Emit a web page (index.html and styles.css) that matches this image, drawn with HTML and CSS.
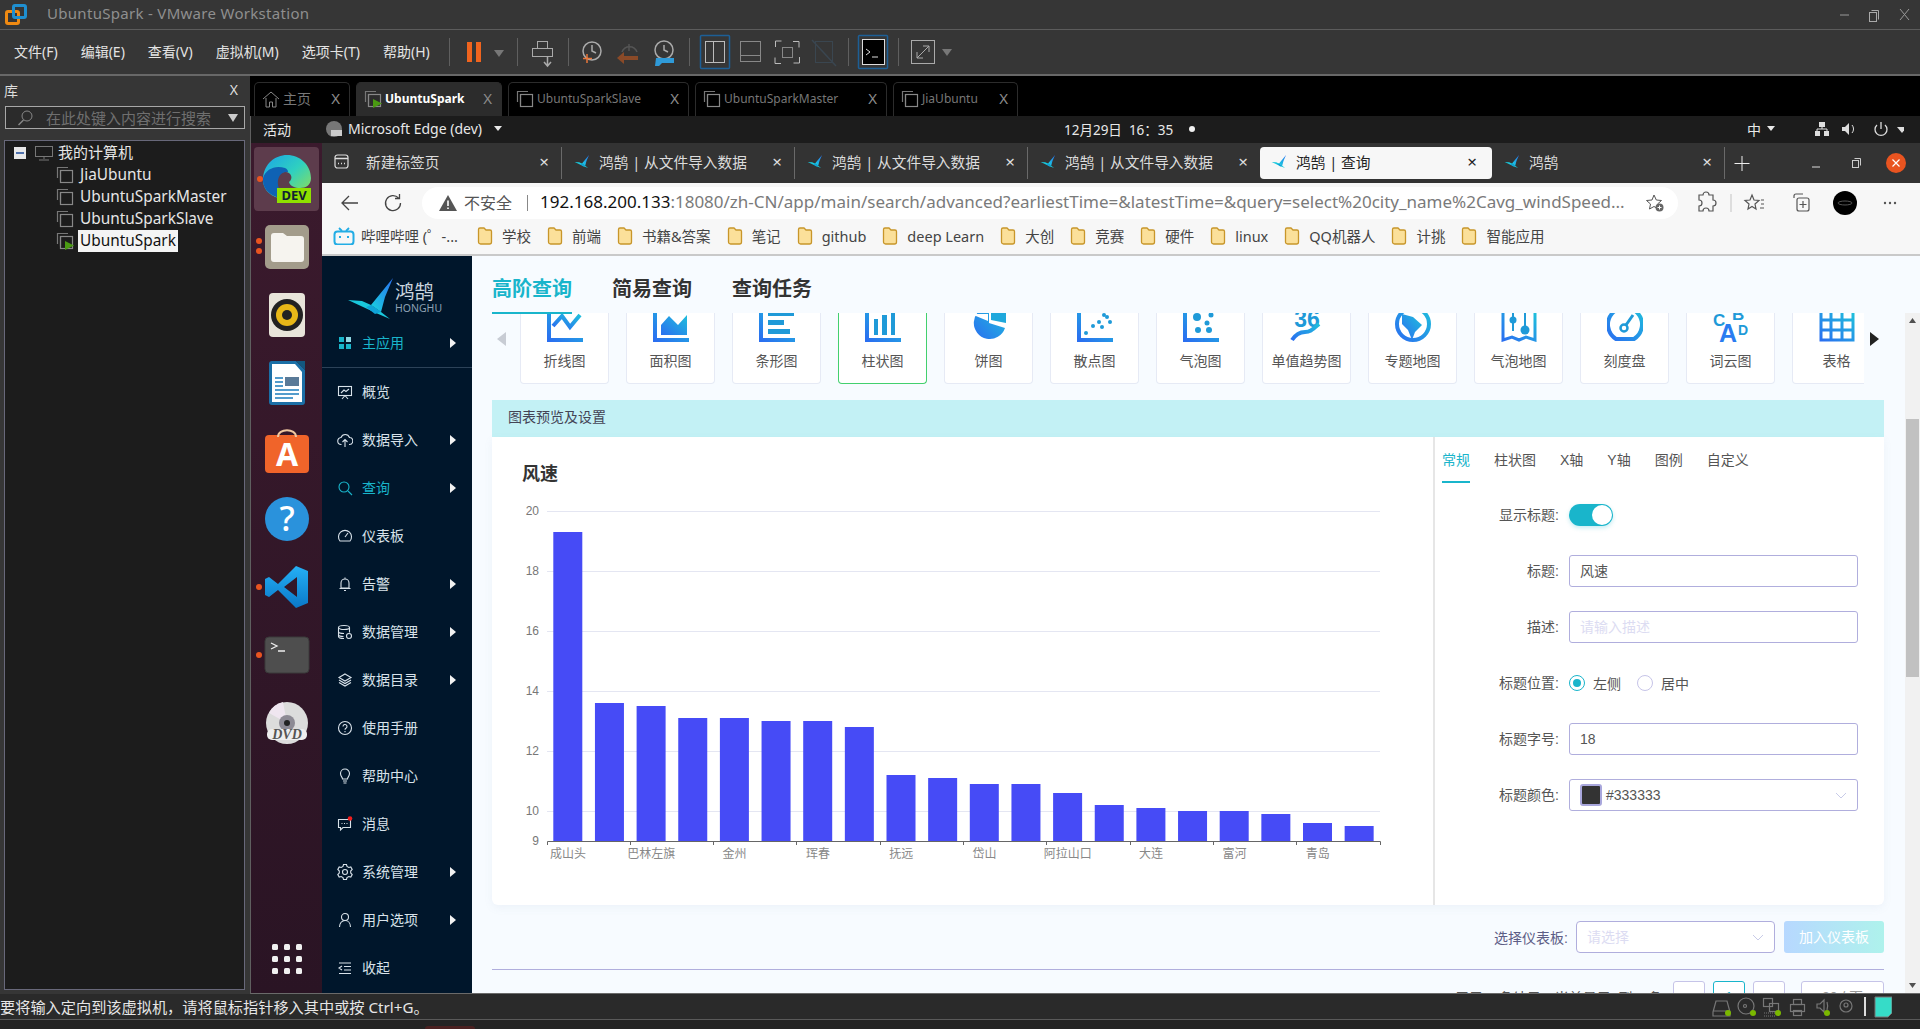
FILE: index.html
```html
<!DOCTYPE html>
<html lang="zh-CN">
<head>
<meta charset="utf-8">
<title>UbuntuSpark - VMware Workstation</title>
<link rel="stylesheet" href="styles.css">
</head>
<body>
<svg class="defs" width="0" height="0" aria-hidden="true">
  <defs>
    <linearGradient id="ig" x1="0" y1="1" x2="1" y2="0"><stop offset="0" stop-color="#2a6ff0"/><stop offset="1" stop-color="#1fbfdc"/></linearGradient>
    <linearGradient id="wing" x1="0" y1="1" x2="1" y2="0"><stop offset="0" stop-color="#18d6e0"/><stop offset="1" stop-color="#2a6ff0"/></linearGradient>
    <linearGradient id="edge" x1="0" y1="0" x2="1" y2="1"><stop offset="0" stop-color="#1aa3e8"/><stop offset=".5" stop-color="#2fd0c0"/><stop offset="1" stop-color="#9be04a"/></linearGradient>
    <linearGradient id="vsc" x1="0" y1="0" x2="0" y2="1"><stop offset="0" stop-color="#25b0f5"/><stop offset="1" stop-color="#0a78c8"/></linearGradient>
    <symbol id="bird" viewBox="346 275 50 45">
      <polygon points="393,277 371,304 381,311 385,296" fill="url(#wing)"/>
      <polygon points="348,299 362,300 371,304 381,311 390,318 376,312" fill="#19c8dc"/>
      <polygon points="371,304 381,311 375,313 366,306" fill="#0fa3d8"/>
    </symbol>
    <symbol id="folder" viewBox="0 0 16 20">
      <path d="M1.500 3.500a1.500 1.500 0 0 1 1.500-1.500h4l2 2h4a1.500 1.500 0 0 1 1.500 1.500v10.500a2 2 0 0 1-2 2h-9a2 2 0 0 1-2-2z" fill="#fbe09a" stroke="#c8962a" stroke-width="1.300"/>
    </symbol>
    <symbol id="vmicon" viewBox="0 0 18 18">
      <path d="M1.500 12V1.500H12" fill="none" stroke="#777" stroke-width="1.200"/>
      <path d="M4.500 14.500V4.500H14" fill="none" stroke="#777" stroke-width="1.200"/>
      <rect x="4.500" y="4.500" width="12" height="12" fill="none" stroke="#888" stroke-width="1.200"/>
    </symbol>
    <symbol id="vmrun" viewBox="0 0 18 18">
      <path d="M1.500 12V1.500H12" fill="none" stroke="#777" stroke-width="1.200"/>
      <path d="M4.500 14.500V4.500H14" fill="none" stroke="#777" stroke-width="1.200"/>
      <rect x="4.500" y="4.500" width="12" height="12" fill="none" stroke="#888" stroke-width="1.200"/>
      <polygon points="9,9 18,13.500 9,18" fill="#4a9a12"/>
    </symbol>
  </defs>
</svg>

<div class="app">
  <header class="titlebar">
    <svg class="vm-logo" width="22" height="22" viewBox="0 0 22 22"><rect x="1.500" y="7.500" width="12" height="12" rx="1.500" fill="none" stroke="#f08a12" stroke-width="3"/><rect x="8.500" y="1.500" width="12" height="12" rx="1.500" fill="none" stroke="#1f8fd0" stroke-width="3"/></svg>
    <span class="title-text">UbuntuSpark - VMware Workstation</span>
    <svg class="win-ctl" width="85" height="28" viewBox="1835 0 85 28"><path d="M1840 14h9" stroke="#999"/><rect x="1869.500" y="11.500" width="7" height="9" fill="none" stroke="#aaa"/><path d="M1871.500 9.500h7v9" fill="none" stroke="#aaa"/><path d="M1900 8l9 11M1909 8l-9 11" stroke="#999"/></svg>
  </header>

  <nav class="toolbar">
    <div class="menus"><span>文件(F)</span><span>编辑(E)</span><span>查看(V)</span><span>虚拟机(M)</span><span>选项卡(T)</span><span>帮助(H)</span></div>
    <i class="sep"></i>
    <svg width="67" height="45" viewBox="450 30 67 45"><rect x="467" y="42" width="5" height="20" fill="#f0641e"/><rect x="476" y="42" width="5" height="20" fill="#f0641e"/><polygon points="494,50 504,50 499,57" fill="#777"/></svg>
    <i class="sep"></i>
    <svg width="50" height="45" viewBox="518 30 50 45"><g fill="none" stroke="#aaa"><rect x="537.500" y="41.500" width="10" height="7"/><rect x="532.500" y="48.500" width="20" height="8"/><path d="M547.500 57v9M544 62l3.500 4 3.500-4" stroke-width="1.500"/></g></svg>
    <i class="sep"></i>
    <svg width="120" height="45" viewBox="569 30 120 45"><g fill="none" stroke-width="1.500"><circle cx="592" cy="51" r="9" stroke="#aaa"/><path d="M592 45v6l4 2" stroke="#aaa"/><path d="M587 54v9M583 58.500h9" stroke="#e8763a"/><path d="M622 52a8 8 0 0 1 15 0" stroke="#555"/><path d="M629 44v7" stroke="#555"/><circle cx="664" cy="50" r="9" stroke="#aaa"/><path d="M664 45v5l4 2" stroke="#aaa"/></g><rect x="619" y="56" width="19" height="4" fill="#8a4a28"/><polygon points="624,52 624,64 617,58" fill="#8a4a28"/><path d="M656 58h18v5h-12l-3 3h-4z" fill="#2f9ad8"/></svg>
    <i class="sep"></i>
    <svg width="158" height="45" viewBox="690 30 158 45"><g fill="none"><rect x="700.500" y="35.500" width="29" height="33" rx="1" stroke="#1d5f96" stroke-width="1.500"/><rect x="705.500" y="41.500" width="19" height="21" stroke="#bbb"/><path d="M713.500 42v20" stroke="#bbb"/><rect x="740.500" y="41.500" width="20" height="20" stroke="#888"/><path d="M741 55.500h19" stroke="#888"/><path d="M775.500 47v-6h6M793 41.500h6v6M799.500 57v6h-6M781 63.500h-6v-6" stroke="#bbb"/><rect x="782.500" y="47.500" width="10" height="10" stroke="#888"/><rect x="815.500" y="41.500" width="17" height="21" stroke="#3a4650"/><path d="M812 40l24 26" stroke="#3a4650" stroke-width="1.500"/></g></svg>
    <i class="sep"></i>
    <svg width="49" height="45" viewBox="849 30 49 45"><rect x="858.500" y="35.500" width="29" height="33" rx="1" fill="none" stroke="#1d5f96" stroke-width="1.500"/><rect x="862.500" y="39.500" width="22" height="25" fill="#000" stroke="#ddd"/><path d="M866 49l4 3-4 3M872 57h6" fill="none" stroke="#ddd"/></svg>
    <i class="sep"></i>
    <svg width="62" height="45" viewBox="899 30 62 45"><rect x="911.500" y="40.500" width="23" height="23" fill="none" stroke="#aaa"/><path d="M917 58l12-12M923 46h6v6M917 52v6h6" fill="none" stroke="#aaa"/><polygon points="942,49 952,49 947,56" fill="#777"/></svg>
  </nav>

  <div class="workspace">
    <aside class="library">
      <div class="lib-head"><span>库</span><span class="lib-x">X</span></div>
      <div class="lib-search">
        <svg width="18" height="18" viewBox="0 0 18 18"><circle cx="11" cy="7" r="5" fill="none" stroke="#888"/><path d="M7.500 11l-5 5" stroke="#888" stroke-width="1.500"/></svg>
        <span>在此处键入内容进行搜索</span>
        <svg class="lib-tri" width="10" height="8" viewBox="0 0 10 8"><polygon points="0,0 10,0 5,8" fill="#ccc"/></svg>
      </div>
      <div class="tree">
        <div class="tree-row root">
          <svg width="12" height="12" viewBox="0 0 12 12"><rect width="12" height="12" fill="#e8e8e8"/><path d="M2 6h8" stroke="#1c4a9a" stroke-width="1.500"/></svg>
          <svg class="tree-pc" width="18" height="15" viewBox="0 0 18 15"><rect x=".5" y=".5" width="17" height="10" fill="none" stroke="#777"/><path d="M9 11v2M4 14h10" stroke="#777"/></svg>
          <span>我的计算机</span>
        </div>
        <div class="tree-row child"><svg width="18" height="18"><use href="#vmicon"/></svg><span>JiaUbuntu</span></div>
        <div class="tree-row child"><svg width="18" height="18"><use href="#vmicon"/></svg><span>UbuntuSparkMaster</span></div>
        <div class="tree-row child"><svg width="18" height="18"><use href="#vmicon"/></svg><span>UbuntuSparkSlave</span></div>
        <div class="tree-row child"><svg width="18" height="18"><use href="#vmrun"/></svg><span class="selected">UbuntuSpark</span></div>
      </div>
    </aside>

    <section class="vm">
      <div class="vm-tabs">
        <div class="vm-tab w-home"><svg width="18" height="18" viewBox="0 0 18 18"><path d="M1 9l8-7 8 7M4 8v9h3.500v-5h3v5H14V8" fill="none" stroke="#888"/></svg><span>主页</span><b>X</b></div>
        <div class="vm-tab w-spark active"><svg width="18" height="18"><use href="#vmrun"/></svg><span>UbuntuSpark</span><b>X</b></div>
        <div class="vm-tab w-slave"><svg width="18" height="18"><use href="#vmicon"/></svg><span>UbuntuSparkSlave</span><b>X</b></div>
        <div class="vm-tab w-master"><svg width="18" height="18"><use href="#vmicon"/></svg><span>UbuntuSparkMaster</span><b>X</b></div>
        <div class="vm-tab w-jia"><svg width="18" height="18"><use href="#vmicon"/></svg><span>JiaUbuntu</span><b>X</b></div>
      </div>

      <div class="guest">
        <div class="gnome-bar">
          <span class="g-act">活动</span>
          <span class="g-app"><svg width="16" height="16" viewBox="0 0 16 16"><circle cx="8" cy="8" r="8" fill="#777"/><rect x="5" y="9" width="11" height="6" fill="#ccc"/></svg>Microsoft Edge (dev)<i class="g-tri"></i></span>
          <span class="g-clock">12月29日&nbsp;&nbsp;16：35<i class="g-dot"></i></span>
          <span class="g-right">
            <span class="g-ime">中<i class="g-tri"></i></span>
            <svg width="90" height="16" viewBox="1810 0 90 16"><g fill="#ddd"><rect x="1815" y="1" width="6" height="5"/><rect x="1811" y="10" width="5" height="5"/><rect x="1820" y="10" width="5" height="5"/><path d="M1818 6v2M1813 10V8h10v2" stroke="#ddd" fill="none"/><polygon points="1838,6 1841,6 1845,2 1845,14 1841,10 1838,10"/><path d="M1848 4a6 6 0 0 1 0 8" stroke="#ddd" fill="none"/><path d="M1873 4a6 6 0 1 0 8 0M1877 1v7" stroke="#ddd" fill="none" stroke-width="1.300"/><polygon points="1893,6 1903,6 1898,12"/></g></svg>
          </span>
        </div>

        <div class="guest-body">
          <aside class="dock">
            <div class="dock-item active"><i class="dot"></i>
              <svg width="50" height="50" viewBox="0 0 50 50"><path d="M1 24C2 10 13 1 25 1c13 0 24 10 24 23 0 7-5 10-11 10-5 0-10-2-11-6 4-3 3-9-3-10-7-1-12 5-11 13 1 6 6 10 12 13C13 46 0 38 1 24z" fill="url(#edge)"/><path d="M1 24c3-9 12-13 22-10 2 1 3 2 3 4-7-1-11 5-10 13 1 6 6 10 12 13C13 46 0 38 1 24z" fill="#0f62b4"/><rect x="15" y="34" width="34" height="15" fill="#8fe000"/><text class="dev-text" x="32" y="46">DEV</text></svg>
            </div>
            <div class="dock-item"><i class="dot two"></i>
              <svg width="46" height="46" viewBox="0 0 46 46"><rect x="1" y="1" width="44" height="44" rx="5" fill="#a39c8b"/><path d="M7 12a3 3 0 0 1 3-3h9l4 3h14a3 3 0 0 1 3 3v20a3 3 0 0 1-3 3H10a3 3 0 0 1-3-3z" fill="#f6f4ef"/></svg>
            </div>
            <div class="dock-item">
              <svg width="38" height="46" viewBox="0 0 38 46"><rect x="1" y="1" width="36" height="44" rx="4" fill="#e8e4da"/><circle cx="19" cy="23" r="16" fill="#222"/><circle cx="19" cy="23" r="11" fill="#e8b818"/><circle cx="19" cy="23" r="5" fill="#222"/></svg>
            </div>
            <div class="dock-item">
              <svg width="38" height="46" viewBox="0 0 38 46"><path d="M1 4a3 3 0 0 1 3-3h24l9 9v32a3 3 0 0 1-3 3H4a3 3 0 0 1-3-3z" fill="#1b6fa6"/><path d="M4 4h23l7 8v30H4z" fill="#fff"/><polygon points="28,1 37,1 37,10" fill="#12577f"/><rect x="17" y="17" width="14" height="9" fill="#5a7a98"/><g stroke="#1b7cbc" stroke-width="1.500"><path d="M7 18h8M7 22h8M7 26h8M7 30h24M7 34h24M7 38h18"/></g></svg>
            </div>
            <div class="dock-item">
              <svg width="46" height="46" viewBox="0 0 46 46"><rect x="1" y="7" width="44" height="38" rx="4" fill="#f0642a"/><path d="M14 9c0-9 18-9 18 0" fill="none" stroke="#f0c8a0" stroke-width="2"/><text class="store-a" x="23" y="38">A</text></svg>
            </div>
            <div class="dock-item">
              <svg width="46" height="46" viewBox="0 0 46 46"><circle cx="23" cy="23" r="22" fill="#2a92dc"/><text class="help-q" x="23" y="35">?</text></svg>
            </div>
            <div class="dock-item"><i class="dot"></i>
              <svg width="44" height="44" viewBox="0 0 44 44"><path d="M31 1L13 19 4 12 0 14v16l4 2 9-7 18 18 12-5V6zM32 12v20L19 22z" fill="url(#vsc)" fill-rule="evenodd"/></svg>
            </div>
            <div class="dock-item"><i class="dot"></i>
              <svg width="46" height="38" viewBox="0 0 46 38"><rect x="1" y="1" width="44" height="36" rx="4" fill="#4e4e4e" stroke="#3a3a3a"/><path d="M7 7l6 3-6 3M14 15h7" fill="none" stroke="#eee" stroke-width="1.300"/></svg>
            </div>
            <div class="dock-item">
              <svg width="44" height="44" viewBox="0 0 44 44"><circle cx="22" cy="22" r="21" fill="#dcdcdc"/><path d="M22 22L4 12a21 21 0 0 1 14-11z" fill="#efe6f0"/><circle cx="22" cy="22" r="8" fill="#8d8a94"/><circle cx="22" cy="22" r="3" fill="#222"/><rect x="2" y="28" width="40" height="11" rx="5" fill="#eee"/><text class="dvd-t" x="22" y="38">DVD</text></svg>
            </div>
            <div class="dock-grid"><i></i><i></i><i></i><i></i><i></i><i></i><i></i><i></i><i></i></div>
          </aside>

          <div class="browser">
            <div class="b-tabs">
              <div class="b-tab first"><svg class="t-ico" width="15" height="15" viewBox="0 0 15 15"><rect x="1" y="1" width="13" height="13" rx="2.500" fill="none" stroke="#ddd" stroke-width="1.200"/><path d="M1 4.500h13M4 9.500h1M7 9.500h1M10 9.500h1" stroke="#ddd" stroke-width="1.300"/></svg><span>新建标签页</span><b>×</b></div>
              <div class="b-tab"><svg class="t-ico" width="16" height="15"><use href="#bird"/></svg><span>鸿鹄 | 从文件导入数据</span><b>×</b></div>
              <div class="b-tab"><svg class="t-ico" width="16" height="15"><use href="#bird"/></svg><span>鸿鹄 | 从文件导入数据</span><b>×</b></div>
              <div class="b-tab last-pre"><svg class="t-ico" width="16" height="15"><use href="#bird"/></svg><span>鸿鹄 | 从文件导入数据</span><b>×</b></div>
              <div class="b-tab on"><svg class="t-ico" width="16" height="15"><use href="#bird"/></svg><span>鸿鹄 | 查询</span><b>×</b></div>
              <div class="b-tab"><svg class="t-ico" width="16" height="15"><use href="#bird"/></svg><span>鸿鹄</span><b>×</b></div>
              <svg class="b-win" width="195" height="40" viewBox="1725 0 195 40"><path d="M1742 13v15M1734.500 20.500h15" stroke="#eee" fill="none"/><path d="M1812 24h8" stroke="#ddd"/><rect x="1852.500" y="17.500" width="6" height="7" fill="none" stroke="#ccc"/><path d="M1854.500 15.500h6v7" fill="none" stroke="#ccc"/><circle cx="1896" cy="20" r="10" fill="#e95420"/><path d="M1892.500 16.500l7 7M1899.500 16.500l-7 7" stroke="#fff" stroke-width="1.200"/></svg>
            </div>

            <div class="b-nav">
              <svg class="nav-svg back" width="20" height="20" viewBox="0 0 20 20"><path d="M18 10H3M9 3l-7 7 7 7" fill="none" stroke="#444" stroke-width="1.300"/></svg>
              <svg class="nav-svg reload" width="20" height="20" viewBox="0 0 20 20"><path d="M15.500 5a7.500 7.500 0 1 0 2 5" fill="none" stroke="#444" stroke-width="1.300"/><path d="M16.500 1v4.500H12" fill="none" stroke="#444" stroke-width="1.300"/></svg>
              <div class="pill">
                <svg width="18" height="16" viewBox="0 0 18 16"><path d="M9 0l9 16H0z" fill="#555"/><path d="M9 5.500v5.500M9 12.500v1.500" stroke="#fff" stroke-width="1.600"/></svg>
                <span class="insecure">不安全</span><i class="pill-sep"></i>
                <span class="url"><em>192.168.200.133</em>:18080/zh-CN/app/main/search/advanced?earliestTime=&amp;latestTime=&amp;query=select%20city_name%2Cavg_windSpeed...</span>
                <svg class="pill-star" width="20" height="20" viewBox="0 0 20 20"><path d="M9 2l2.300 5 5.200.5-4 3.500 1 5-4.500-2.500L4.500 16l1-5-4-3.500L7 7z" fill="none" stroke="#555"/><circle cx="14.500" cy="14.500" r="4" fill="#666"/><path d="M14.500 12.500v4M12.500 14.500h4" stroke="#fff"/></svg>
              </div>
              <svg class="b-tools" width="202" height="36" viewBox="1695 0 202 36"><g fill="none" stroke="#555" stroke-width="1.200"><path d="M1702 11a3 3 0 0 1 6 0h4v5a3 3 0 0 1 0 6v5h-4a3 3 0 0 0-6 0h-4v-5a3 3 0 0 0 0-6v-5z" transform="translate(1 -1)"/><path d="M1731 9v18" stroke="#ccc"/><path d="M1752 10l2 5 5 .5-4 3.500 1 5-4-2.500-4 2.500 1-5-4-3.500 5-.5z"/><path d="M1761 15h3M1761 19h3M1760 23h4"/><path d="M1794 13v-2a2 2 0 0 1 2-2h7"/><rect x="1797" y="13" width="12" height="13" rx="2"/><path d="M1803 16v7M1799.500 19.500h7"/></g><circle cx="1845" cy="18" r="12" fill="#000"/><ellipse cx="1845" cy="18" rx="7" ry="2" fill="none" stroke="#555"/><circle cx="1885" cy="18" r="1.200" fill="#555"/><circle cx="1890" cy="18" r="1.200" fill="#555"/><circle cx="1895" cy="18" r="1.200" fill="#555"/></svg>
            </div>

            <div class="b-marks">
              <span class="mark bili"><svg width="22" height="18" viewBox="0 0 22 18"><rect x="1.500" y="4.500" width="19" height="13" rx="3" fill="none" stroke="#23ade5" stroke-width="2"/><path d="M6 1l3 3M16 1l-3 3" stroke="#23ade5" stroke-width="1.800"/><path d="M7 9v2M15 9v2" stroke="#23ade5" stroke-width="2"/></svg>哔哩哔哩 (゜-...</span>
              <span class="mark"><svg width="16" height="20"><use href="#folder"/></svg>学校</span>
              <span class="mark"><svg width="16" height="20"><use href="#folder"/></svg>前端</span>
              <span class="mark"><svg width="16" height="20"><use href="#folder"/></svg>书籍&amp;答案</span>
              <span class="mark"><svg width="16" height="20"><use href="#folder"/></svg>笔记</span>
              <span class="mark"><svg width="16" height="20"><use href="#folder"/></svg>github</span>
              <span class="mark"><svg width="16" height="20"><use href="#folder"/></svg>deep Learn</span>
              <span class="mark"><svg width="16" height="20"><use href="#folder"/></svg>大创</span>
              <span class="mark"><svg width="16" height="20"><use href="#folder"/></svg>竞赛</span>
              <span class="mark"><svg width="16" height="20"><use href="#folder"/></svg>硬件</span>
              <span class="mark"><svg width="16" height="20"><use href="#folder"/></svg>linux</span>
              <span class="mark"><svg width="16" height="20"><use href="#folder"/></svg>QQ机器人</span>
              <span class="mark"><svg width="16" height="20"><use href="#folder"/></svg>计挑</span>
              <span class="mark"><svg width="16" height="20"><use href="#folder"/></svg>智能应用</span>
            </div>

            <div class="site">
              <aside class="side">
                <div class="brand">
                  <svg width="50" height="45"><use href="#bird"/></svg>
                  <div class="brand-t"><strong>鸿鹄</strong><small>HONGHU</small></div>
                </div>
                <ul class="side-nav">
                  <li class="on first"><svg viewBox="0 0 16 16" width="16" height="16"><rect x="2" y="2" width="5" height="5" fill="#19b5cb"/><rect x="9" y="2" width="5" height="5" fill="#8fd8e4"/><rect x="2" y="9" width="5" height="5" fill="#19b5cb"/><rect x="9" y="9" width="5" height="5" fill="#19b5cb"/></svg><span>主应用</span><i class="tri"></i></li>
                  <li><svg viewBox="0 0 16 16" width="16" height="16" class="ic"><rect x="1.500" y="2.500" width="13" height="9"/><path d="M4 9l3-3 2 1.500L12 5M8 11.500L5 15M8 11.500L11 15"/></svg><span>概览</span></li>
                  <li><svg viewBox="0 0 16 16" width="16" height="16" class="ic"><path d="M4.500 12.500a3.500 3.500 0 0 1-.5-7 4.500 4.500 0 0 1 8.500 0 3.500 3.500 0 0 1-.5 7M8 15V8M5.500 10L8 7.500 10.500 10"/></svg><span>数据导入</span><i class="tri"></i></li>
                  <li class="on"><svg viewBox="0 0 16 16" width="16" height="16" class="ic"><circle cx="7" cy="7" r="5"/><path d="M11 11l4 4"/></svg><span>查询</span><i class="tri"></i></li>
                  <li><svg viewBox="0 0 16 16" width="16" height="16" class="ic"><path d="M3 13a6.500 6.500 0 1 1 10 0zM8 9l3-4"/></svg><span>仪表板</span></li>
                  <li><svg viewBox="0 0 16 16" width="16" height="16" class="ic"><path d="M4 12V7a4 4 0 0 1 8 0v5zM2.500 12.500h11M7 14.500h2M8 1.500v1.500"/></svg><span>告警</span><i class="tri"></i></li>
                  <li><svg viewBox="0 0 16 16" width="16" height="16" class="ic"><ellipse cx="7" cy="3.500" rx="5.500" ry="2"/><path d="M1.500 3.500v9c0 1 2 2 5.500 2M1.500 7.500c0 1 2 2 5.500 2M12.500 3.500v5M1.500 10.500c0 1 2 2 5 2"/><circle cx="12" cy="12" r="2.500"/></svg><span>数据管理</span><i class="tri"></i></li>
                  <li><svg viewBox="0 0 16 16" width="16" height="16" class="ic"><path d="M8 2l6 3.500-6 3.500-6-3.500zM2 8l6 3.500L14 8M2 10.500L8 14l6-3.500"/></svg><span>数据目录</span><i class="tri"></i></li>
                  <li><svg viewBox="0 0 16 16" width="16" height="16" class="ic"><circle cx="8" cy="8" r="6.500"/><path d="M6 6.500a2 2 0 1 1 3 1.700c-.7.400-1 .8-1 1.500M8 11v1.200"/></svg><span>使用手册</span></li>
                  <li><svg viewBox="0 0 16 16" width="16" height="16" class="ic"><path d="M5.500 11c0-2-2-2.500-2-5.500a4.500 4.500 0 0 1 9 0c0 3-2 3.500-2 5.500zM6 13h4M6.500 15h3"/></svg><span>帮助中心</span></li>
                  <li><svg viewBox="0 0 16 16" width="16" height="16" class="ic"><path d="M1.500 3.500h12v8H6L3.500 14v-2.500h-2zM4.500 7.500h1M7 7.500h1M9.500 7.500h1"/><circle class="red" cx="13" cy="2.500" r="2.300"/></svg><span>消息</span></li>
                  <li><svg viewBox="0 0 16 16" width="16" height="16" class="ic"><path d="M6.500 1.500h3l.5 2 1.800 1 2-.6 1.400 2.600-1.500 1.500v2l1.500 1.500-1.400 2.600-2-.6-1.800 1-.5 2h-3l-.5-2-1.800-1-2 .6L.8 11.500l1.500-1.500V8L.8 6.500l1.400-2.600 2 .6L6 3.500z" transform="translate(0 -1)"/><circle cx="8" cy="8" r="2.500"/></svg><span>系统管理</span><i class="tri"></i></li>
                  <li><svg viewBox="0 0 16 16" width="16" height="16" class="ic"><circle cx="8" cy="5" r="3.500"/><path d="M2.500 15c0-4 2.500-6.500 5.500-6.500s5.500 2.500 5.500 6.500"/></svg><span>用户选项</span><i class="tri"></i></li>
                  <li><svg viewBox="0 0 16 16" width="16" height="16" class="ic"><path d="M2 3h12M7 6.500h7M7 10h7M2 13.500h12M5 6l-3 2 3 2"/></svg><span>收起</span></li>
                </ul>
              </aside>

              <main class="main">
                <div class="main-tabs"><span class="on">高阶查询</span><span>简易查询</span><span>查询任务</span></div>
                <div class="main-row">
                  <div class="content">
                    <div class="gallery">
                      <i class="arrow-l"></i>
                      <div class="strip">
                        <div class="card"><svg viewBox="0 7 36 29" width="36" height="29"><path d="M2 7v27h34" fill="none" stroke="url(#ig)" stroke-width="4"/><path d="M6 20l9-10 8 11 10-12" fill="none" stroke="url(#ig)" stroke-width="4"/></svg><span>折线图</span></div>
                        <div class="card"><svg viewBox="0 7 36 29" width="36" height="29"><path d="M2 7v27h34" fill="none" stroke="url(#ig)" stroke-width="4"/><path d="M8 29V19l8-9 9 9 9-10v20z" fill="url(#ig)"/></svg><span>面积图</span></div>
                        <div class="card"><svg viewBox="0 7 36 29" width="36" height="29"><path d="M2 7v27h34" fill="none" stroke="url(#ig)" stroke-width="4"/><rect x="9" y="7" width="26" height="3" fill="#1f9ad8"/><rect x="9" y="14" width="16" height="5" fill="#1f9ad8"/><rect x="9" y="23" width="22" height="5" fill="#1f9ad8"/></svg><span>条形图</span></div>
                        <div class="card active"><svg viewBox="0 7 36 29" width="36" height="29"><path d="M2 7v27h34" fill="none" stroke="url(#ig)" stroke-width="4"/><rect x="9" y="13" width="4" height="16" fill="#1f9ad8"/><rect x="17" y="9" width="5" height="20" fill="#1f9ad8"/><rect x="26" y="7" width="4" height="22" fill="#1f9ad8"/></svg><span>柱状图</span></div>
                        <div class="card"><svg viewBox="0 7 36 29" width="36" height="29"><path d="M17 18l16 5a16 16 0 1 1-16-21z" transform="translate(1 -1)" fill="url(#ig)"/><path d="M0 8h17v7z" fill="#fff"/><path d="M20 7h15v10l-15-3z" fill="#1fa8dc"/></svg><span>饼图</span></div>
                        <div class="card"><svg viewBox="0 7 36 29" width="36" height="29"><path d="M2 7v27h34" fill="none" stroke="url(#ig)" stroke-width="4"/><g fill="#1f9ad8"><circle cx="9" cy="27" r="2"/><circle cx="16" cy="20" r="2"/><circle cx="22" cy="16" r="2"/><circle cx="25" cy="21" r="2"/><circle cx="30" cy="11" r="2"/><circle cx="33" cy="16" r="2"/><circle cx="27" cy="9" r="2"/></g></svg><span>散点图</span></div>
                        <div class="card"><svg viewBox="0 7 36 29" width="36" height="29"><path d="M2 7v27h34" fill="none" stroke="url(#ig)" stroke-width="4"/><g fill="#1f9ad8"><circle cx="14" cy="11" r="4"/><circle cx="28" cy="9" r="2.500"/><circle cx="24" cy="17" r="2.500"/><circle cx="15" cy="24" r="3"/><circle cx="26" cy="24" r="3"/></g></svg><span>气泡图</span></div>
                        <div class="card"><svg viewBox="0 7 36 29" width="36" height="29"><text class="ico-num" x="18" y="21">36</text><path d="M3 34c4-6 8-8 13-8 5 0 7-2 14-8" fill="none" stroke="url(#ig)" stroke-width="4"/></svg><span>单值趋势图</span></div>
                        <div class="card"><svg viewBox="0 7 36 29" width="36" height="29"><circle cx="18" cy="18" r="16" fill="none" stroke="url(#ig)" stroke-width="4"/><path d="M7 8l11 3 9 8-7 7-3 8-4-10-6-6z" fill="url(#ig)"/></svg><span>专题地图</span></div>
                        <div class="card"><svg viewBox="0 7 36 29" width="36" height="29"><path d="M2 7v27l9-3 7 3 7-3 9 3V7" fill="none" stroke="url(#ig)" stroke-width="3"/><path d="M12 7v18M24 7v18" stroke="#1f9ad8" stroke-width="2"/><circle cx="12" cy="14" r="3.500" fill="#1f9ad8"/><circle cx="24" cy="24" r="4.500" fill="#1f9ad8"/></svg><span>气泡地图</span></div>
                        <div class="card"><svg viewBox="0 7 36 29" width="36" height="29"><path d="M9 33a17 17 0 1 1 18 0z" fill="none" stroke="url(#ig)" stroke-width="4"/><circle cx="17" cy="22" r="3.500" fill="none" stroke="#1f9ad8" stroke-width="2.500"/><path d="M19 19l7-10" stroke="#1f9ad8" stroke-width="3"/></svg><span>刻度盘</span></div>
                        <div class="card"><svg viewBox="0 7 36 29" width="36" height="29"><text class="ico-wc c" x="0" y="20">C</text><text class="ico-wc b" x="19" y="14">B</text><text class="ico-wc a" x="6" y="36">A</text><text class="ico-wc d" x="25" y="29">D</text></svg><span>词云图</span></div>
                        <div class="card"><svg viewBox="0 7 36 29" width="36" height="29"><path d="M2 7v27h32V7M2 14h32M2 24h32M12 7v27M23 7v27" fill="none" stroke="url(#ig)" stroke-width="3"/></svg><span>表格</span></div>
                      </div>
                      <i class="arrow-r"></i>
                    </div>

                    <div class="sec-head">图表预览及设置</div>
                    <section class="panel">
                      <svg class="chart" width="941" height="468" viewBox="492 437 941 468">
                        <text class="c-title" x="522" y="480">风速</text>
                        <g class="grid"><path d="M547 511.500H1380M547 571.500H1380M547 631.500H1380M547 691.500H1380M547 751.500H1380M547 811.500H1380"/></g>
                        <g class="ylab"><text x="539" y="515">20</text><text x="539" y="575">18</text><text x="539" y="635">16</text><text x="539" y="695">14</text><text x="539" y="755">12</text><text x="539" y="815">10</text><text x="539" y="845">9</text></g>
                        <g class="bars">
                          <rect x="553.3" y="532" width="29" height="309"/>
                          <rect x="594.95" y="703" width="29" height="138"/>
                          <rect x="636.6" y="706" width="29" height="135"/>
                          <rect x="678.25" y="718" width="29" height="123"/>
                          <rect x="719.9" y="718" width="29" height="123"/>
                          <rect x="761.55" y="721" width="29" height="120"/>
                          <rect x="803.2" y="721" width="29" height="120"/>
                          <rect x="844.85" y="727" width="29" height="114"/>
                          <rect x="886.5" y="775" width="29" height="66"/>
                          <rect x="928.15" y="778" width="29" height="63"/>
                          <rect x="969.8" y="784" width="29" height="57"/>
                          <rect x="1011.45" y="784" width="29" height="57"/>
                          <rect x="1053.1" y="793" width="29" height="48"/>
                          <rect x="1094.75" y="805" width="29" height="36"/>
                          <rect x="1136.4" y="808" width="29" height="33"/>
                          <rect x="1178.05" y="811" width="29" height="30"/>
                          <rect x="1219.7" y="811" width="29" height="30"/>
                          <rect x="1261.35" y="814" width="29" height="27"/>
                          <rect x="1303" y="823" width="29" height="18"/>
                          <rect x="1344.65" y="826" width="29" height="15"/>
                        </g>
                        <path class="axis" d="M547.500 845V841.500H1380.500V845M630.500 841v4M713.500 841v4M796.500 841v4M880.500 841v4M963.500 841v4M1046.500 841v4M1130.500 841v4M1213.500 841v4M1296.500 841v4"/>
                        <g class="xlab"><text x="568" y="858">成山头</text><text x="651.3" y="858">巴林左旗</text><text x="734.6" y="858">金州</text><text x="817.9" y="858">珲春</text><text x="901.2" y="858">抚远</text><text x="984.5" y="858">岱山</text><text x="1067.8" y="858">阿拉山口</text><text x="1151.1" y="858">大连</text><text x="1234.4" y="858">富河</text><text x="1317.7" y="858">青岛</text></g>
                      </svg>
                      <div class="settings">
                        <div class="set-tabs"><span class="on">常规</span><span>柱状图</span><span>X轴</span><span>Y轴</span><span>图例</span><span>自定义</span></div>
                        <div class="form">
                          <label>显示标题:</label><div class="ctl"><span class="switch"><i></i></span></div>
                          <label>标题:</label><div class="input">风速</div>
                          <label>描述:</label><div class="input ph">请输入描述</div>
                          <label>标题位置:</label><div class="ctl radios"><i class="radio on"></i><span>左侧</span><i class="radio"></i><span>居中</span></div>
                          <label>标题字号:</label><div class="input">18</div>
                          <label>标题颜色:</label><div class="input color"><i class="swatch"></i><span>#333333</span><svg class="chev" width="12" height="7" viewBox="0 0 12 7"><path d="M1 1l5 5 5-5" fill="none" stroke="#c8cbe8"/></svg></div>
                        </div>
                      </div>
                    </section>

                    <div class="dash-row">
                      <span class="dash-l">选择仪表板:</span>
                      <div class="input dash-sel ph"><span>请选择</span><svg class="chev" width="12" height="7" viewBox="0 0 12 7"><path d="M1 1l5 5 5-5" fill="none" stroke="#c8cbe8"/></svg></div>
                      <span class="dash-btn">加入仪表板</span>
                    </div>
                    <div class="rule"></div>
                    <div class="pager"><span>展示20条结果，当前显示1到20条</span><i class="pg">&lt;</i><i class="pg cur">1</i><i class="pg">&gt;</i><i class="pg size">20 / 页</i></div>
                  </div>
                  <div class="scroll">
                    <svg width="15" height="14" viewBox="0 0 15 14"><polygon points="7.500,5 11,10 4,10" fill="#505050"/></svg>
                    <i class="thumb"></i>
                    <svg class="scroll-dn" width="15" height="14" viewBox="0 0 15 14"><polygon points="4,4 11,4 7.500,9" fill="#505050"/></svg>
                  </div>
                </div>
              </main>
            </div>
          </div>
        </div>
      </div>
    </section>
  </div>

  <footer class="status">
    <span>要将输入定向到该虚拟机，请将鼠标指针移入其中或按 Ctrl+G。</span>
    <svg width="180" height="25" viewBox="1712 995 180 25"><g fill="none" stroke="#777" stroke-width="1.200"><path d="M1713 1013l3-11h11l3 11v4h-17zM1713 1012h17"/><circle cx="1746" cy="1007" r="8"/><circle cx="1745" cy="1007" r="1.500"/><rect x="1763.500" y="999.500" width="9" height="8"/><rect x="1769.500" y="1004.500" width="9" height="8"/><path d="M1764 1014h12M1764 1017h12" stroke-dasharray="1 1"/><rect x="1793.500" y="1000.500" width="8" height="5"/><rect x="1790.500" y="1005.500" width="14" height="7"/><rect x="1793.500" y="1011.500" width="8" height="5"/><path d="M1817 1005h3l4-4v12l-4-4h-3zM1827 1003c1 3 1 5 0 8"/><circle cx="1846" cy="1007" r="6"/><circle cx="1846" cy="1006" r="2"/></g><g fill="#7ab800"><circle cx="1728" cy="1014" r="3"/><circle cx="1753" cy="1014" r="3"/><circle cx="1778" cy="1014" r="3"/><circle cx="1827" cy="1014" r="3"/></g><path d="M1865 998v19" stroke="#ddd" stroke-width="2"/><path d="M1875 998h17v16l-4 4h-13z" fill="#36dcc8" stroke="#777"/></svg>
  </footer>
  <div class="bottom"><i></i></div>
</div>
</body>
</html>
```

FILE: styles.css
```css
* { box-sizing: border-box; }
html, body { margin: 0; height: 100%; overflow: hidden; background: #232323; }
body { font-family: "Noto Sans", "Noto Sans CJK SC", sans-serif; font-size: 14px; color: #ddd; }
i, em { font-style: normal; }
svg { display: block; flex: none; }
.defs { position: absolute; }

.app { width: 1920px; height: 1029px; display: flex; flex-direction: column; overflow: hidden; background: #363636; }

/* VMware chrome */
.titlebar { height: 29px; display: flex; align-items: center; flex: none; padding-left: 5px; }
.title-text { margin-left: 20px; padding-bottom: 3px; font-size: 15px; color: #8f8f8f; letter-spacing: .3px; }
.win-ctl { margin-left: auto; }

.toolbar { height: 47px; flex: none; display: flex; align-items: center; border-top: 1px solid #5c5c5c; border-bottom: 2px solid #686868; }
.menus { width: 449px; display: flex; gap: 23px; padding: 0 0 3px 14px; color: #e4e4e4; font-size: 14px; }
.sep { width: 1px; height: 28px; background: #5f5f5f; flex: none; }

.workspace { flex: 1; min-height: 0; display: flex; background: #363636; }

.library { width: 250px; flex: none; display: flex; flex-direction: column; }
.lib-head { height: 30px; padding: 0 12px 3px 4px; display: flex; align-items: center; justify-content: space-between; color: #ddd; font-size: 14px; }
.lib-search { height: 23px; margin: 0 5px 0 5px; border: 1px solid #a8a8a8; display: flex; align-items: center; padding-left: 10px; gap: 12px; color: #6f6f6f; font-size: 15px; background: #2b2b2b; }
.lib-tri { margin-left: auto; margin-right: 6px; }
.tree { margin: 11px 5px 4px 4px; flex: 1; background: #1c1c1c; border: 1px solid #68687a; padding-top: 1px; }
.tree-row { height: 22px; display: flex; align-items: center; color: #e6e6e6; font-size: 15px; }
.tree-row.root { padding-left: 9px; }
.tree-row.root span { padding-bottom: 3px; }
.tree-pc { margin-left: 9px; margin-right: 5px; }
.tree-row.child { padding-left: 51px; }
.tree-row.child span { margin-left: 4px; padding: 0 2px; height: 22px; line-height: 21px; font-size: 15.400px; }
.tree-row .selected { background: #f4f4f4; color: #111; }

.vm { flex: 1; min-width: 0; display: flex; flex-direction: column; }
.vm-tabs { height: 40px; flex: none; background: #000; display: flex; align-items: flex-end; gap: 6px; padding-left: 4px; }
.vm-tab { height: 34px; display: flex; align-items: center; padding: 0 9px 0 7px; border: 1px solid #2c2c2c; border-bottom: 0; border-radius: 5px 5px 0 0; font-size: 12px; color: #777; }
.vm-tab span { margin-left: 3px; padding-bottom: 3px; }
.vm-tab svg { margin-bottom: 2px; }
.vm-tab b { margin-left: auto; padding-bottom: 3px; font-weight: 400; font-size: 15px; color: #8a8a8a; }
.vm-tab.active { background: #2c2c2c; color: #fff; font-weight: 700; }
.vm-tab.active b { font-weight: 400; }
.w-home { width: 96px; font-size: 14px; }
.w-spark { width: 146px; }
.w-slave { width: 181px; }
.w-master { width: 192px; }
.w-jia { width: 125px; }

.guest { flex: 1; min-height: 0; display: flex; flex-direction: column; border-left: 1px solid #5f5f5f; border-bottom: 1px solid #6a6a6a; }
.gnome-bar { height: 27px; flex: none; background: #1c1c1c; display: flex; align-items: center; padding-bottom: 2px; font-size: 14px; color: #e8e8e8; }
.g-act { margin-left: 12px; width: 63px; }
.g-app { display: flex; align-items: center; gap: 6px; }
.g-tri { display: inline-block; width: 0; height: 0; border: 4px solid transparent; border-top: 5px solid #e8e8e8; border-bottom: 0; margin-left: 6px; }
.g-clock { margin-left: 562px; font-size: 13.500px; display: flex; align-items: center; }
.g-dot { width: 6px; height: 6px; border-radius: 50%; background: #f0f0f0; margin-left: 16px; }
.g-right { margin-left: auto; display: flex; align-items: center; gap: 39px; padding-right: 16px; }
.g-ime { display: flex; align-items: center; }

.guest-body { flex: 1; min-height: 0; display: flex; }

.dock { width: 71px; flex: none; background: linear-gradient(#3b1a2d, #2a1424); padding-top: 2px; display: flex; flex-direction: column; }
.dock svg { overflow: visible; }
.dock-item { height: 68px; display: flex; align-items: center; justify-content: center; position: relative; flex: none; }
.dock-item.active { background: #5d3c4c; height: 64px; margin: 2px 3px 2px 3px; border-radius: 4px; }
.dot { position: absolute; left: 5px; top: 50%; width: 6px; height: 6px; margin-top: -3px; border-radius: 50%; background: #e95420; }
.dock-item.active .dot { left: 3px; }
.dot.two { margin-top: -9px; box-shadow: 0 10px 0 #e95420; }
.dev-text { font: 700 13px "Noto Sans", sans-serif; fill: #123; text-anchor: middle; }
.store-a { font: 700 32px "Noto Sans", sans-serif; fill: #fff; text-anchor: middle; }
.help-q { font: 500 34px "Noto Sans", sans-serif; fill: #fff; text-anchor: middle; }
.dvd-t { font: italic 900 14px "Liberation Serif", serif; fill: #555; text-anchor: middle; }
.dock-grid { margin: auto auto 19px; display: grid; grid-template-columns: repeat(3, 6px); gap: 6px; }
.dock-grid i { width: 6px; height: 6px; border-radius: 1.500px; background: #f0f0f0; }

/* Browser */
.browser { flex: 1; min-width: 0; display: flex; flex-direction: column; }
.b-tabs { height: 40px; flex: none; background: #333; display: flex; align-items: center; }
.b-tab { width: 233px; height: 32px; flex: none; display: flex; align-items: center; padding: 0 7px 3px 12px; font-size: 14.700px; color: #dcdcdc; border-right: 1px solid #6a6a6a; }
.b-tab.first { width: 240px; padding-left: 12px; }
.b-tab.last-pre { width: 232px; border-right: 0; }
.b-tab span { margin-left: 9px; white-space: nowrap; }
.b-tab.first span { margin-left: 17px; }
.b-tab b { margin-left: auto; margin-right: 5px; font-weight: 400; font-size: 17px; line-height: 1; color: #ddd; }
.b-tab.on { width: 232px; background: #f7f7f7; color: #222; border-radius: 4px; border-right: 0; padding-left: 11px; }
.b-tab.on b { color: #222; margin-right: 8px; }

.b-nav { height: 40px; flex: none; background: #f7f7f7; display: flex; align-items: center; }
.nav-svg.back { margin-left: 18px; }
.nav-svg.reload { margin-left: 23px; }
.pill { margin-left: 19px; width: 1256px; height: 32px; border-radius: 16px; background: #fff; display: flex; align-items: center; padding-left: 17px; }
.insecure { margin-left: 7px; font-size: 16px; color: #555; white-space: nowrap; padding-bottom: 3px; }
.pill-sep { width: 1px; height: 16px; background: #888; margin: 0 12px 0 15px; flex: none; }
.url { font-size: 17px; color: #7a7a7a; white-space: nowrap; padding-bottom: 3px; }
.url em { color: #111; }
.pill-star { margin-left: auto; margin-right: 13px; }
.b-tools { margin-left: 17px; }

.b-marks { height: 33px; flex: none; background: #f7f7f7; border-bottom: 2px solid #c9c9c9; display: flex; align-items: center; gap: 16px; padding: 0 0 6px 11px; color: #444; font-size: 14.500px; white-space: nowrap; }
.mark { display: flex; align-items: center; gap: 9px; }
.mark.bili { gap: 6px; width: 128px; }

.site { flex: 1; min-height: 0; display: flex; }
.side { width: 150px; flex: none; background: #00162b; display: flex; flex-direction: column; color: #d8e2ea; overflow: hidden; }
.brand { height: 63px; flex: none; display: flex; align-items: flex-start; padding: 20px 0 0 24px; }
.brand-t { display: flex; flex-direction: column; margin: 5px 0 0 -1px; color: #c9d4de; line-height: 1; }
.brand-t strong { font-weight: 400; font-size: 19.500px; line-height: 22px; }
.brand-t small { font-size: 10.500px; color: #8da0b3; }
.side-nav { list-style: none; margin: 0; padding: 0; }
.side-nav li { height: 48px; display: flex; align-items: center; padding: 0 16px 0 15px; gap: 9px; font-size: 14px; }
.side-nav li span { padding-bottom: 2px; }
.side-nav li.first { height: 49px; border-bottom: 1px solid #2c4258; }
.side-nav li.on { color: #19b5cb; }
.ic { fill: none; stroke: #d8e2ea; stroke-width: 1.100; }
.on .ic { stroke: #19b5cb; }
.ic .red { fill: #f01e1e; stroke: none; }
.tri { margin-left: auto; width: 0; height: 0; border: 5px solid transparent; border-left: 6px solid #f2f2f2; border-right: 0; }

.main { flex: 1; min-width: 0; background: #f7fbff; display: flex; flex-direction: column; font-family: "Liberation Sans", "Noto Sans CJK SC", sans-serif; }
.main-tabs { height: 57px; flex: none; padding-left: 20px; display: flex; gap: 40px; font-family: "Noto Sans CJK SC", sans-serif; font-size: 20px; font-weight: 700; color: #333; }
.main-tabs span { height: 58px; line-height: 64px; position: relative; z-index: 1; }
.main-tabs .on { color: #19b5cb; border-bottom: 2px solid #19b5cb; }
.main-row { flex: 1; min-height: 0; display: flex; }
.content { flex: 1; min-width: 0; overflow: hidden; padding: 0 21px 0 20px; }
.scroll { width: 15px; flex: none; background: #f1f1f1; display: flex; flex-direction: column; }
.thumb { width: 13px; height: 258px; margin: 92px 0 0 1px; background: #c1c1c1; }
.scroll-dn { margin-top: auto; }

.gallery { height: 73px; display: flex; align-items: flex-start; }
.arrow-l { width: 0; height: 0; margin: 19px 0 0 5px; border: 7px solid transparent; border-right: 9px solid #c8ccd4; border-left: 0; flex: none; }
.strip { width: 1344px; margin-left: 14px; display: flex; gap: 17px; overflow: hidden; flex: none; }
.card { width: 89px; height: 71px; flex: none; background: #fff; border: 1px solid #e6eaf5; border-top: 0; border-radius: 0 0 4px 4px; display: flex; flex-direction: column; align-items: center; color: #555; }
.card span { margin-top: 9px; line-height: 20px; white-space: nowrap; font-size: 14px; }
.card.active { border: 1px solid #43d06e; border-top: 0; }
.arrow-r { width: 0; height: 0; margin: 19px 0 0 6px; border: 7px solid transparent; border-left: 9px solid #222; border-right: 0; flex: none; }
.ico-num { font: 700 23px "Liberation Sans", sans-serif; fill: #1f9ad8; text-anchor: middle; }
.ico-wc { font-family: "Liberation Sans", sans-serif; font-weight: 700; fill: #1f9ad8; }
.ico-wc.c { font-size: 17px; }
.ico-wc.b { font-size: 17px; }
.ico-wc.a { font-size: 25px; fill: #2a7cf0; }
.ico-wc.d { font-size: 14px; }

.sec-head { height: 37px; margin-top: 14px; background: #c3f1f5; padding-left: 16px; line-height: 35px; font-size: 14px; color: #445; }
.panel { height: 468px; background: #fff; display: flex; border-radius: 0 0 6px 6px; box-shadow: 0 3px 8px rgba(120, 140, 180, .08); }
.chart { flex: none; font-family: "Liberation Sans", "Noto Sans CJK SC", sans-serif; }
.c-title { font-size: 18px; font-weight: 700; fill: #333; }
.grid path { stroke: #e4e6f2; fill: none; }
.ylab text { font-size: 12px; fill: #777; text-anchor: end; }
.bars rect { fill: #464bf6; }
.axis { fill: none; stroke: #666; }
.xlab text { font-size: 12px; fill: #888; text-anchor: middle; }

.settings { flex: 1; border-left: 2px solid #e6e6e6; }
.set-tabs { height: 46px; padding-left: 7px; display: flex; gap: 24px; font-size: 14px; color: #555; }
.set-tabs span { height: 46px; line-height: 46px; }
.set-tabs .on { color: #19b5cb; border-bottom: 2px solid #19b5cb; }
.form { margin-top: 16px; display: grid; grid-template-columns: 126px 289px; column-gap: 8px; row-gap: 24px; grid-auto-rows: 32px; align-items: center; }
.form label { text-align: right; color: #555; font-size: 14px; white-space: nowrap; padding: 0 2px 2px 0; }
.input { height: 32px; border: 1px solid #b0aedd; border-radius: 3px; padding: 0 10px; line-height: 30px; font-size: 14px; color: #555; background: #fff; display: flex; align-items: center; }
.input.ph { color: #dcdcf2; }
.ctl { display: flex; align-items: center; }
.switch { width: 44px; height: 22px; border-radius: 11px; background: #19b5cb; display: flex; justify-content: flex-end; align-items: center; padding-right: 1px; box-shadow: 0 2px 4px rgba(25, 181, 203, .25); }
.switch i { width: 20px; height: 20px; border-radius: 50%; background: #fff; }
.radios span { margin: 0 16px 0 8px; color: #555; font-size: 14px; }
.radio { width: 16px; height: 16px; border-radius: 50%; border: 1px solid #c6c4e8; display: flex; align-items: center; justify-content: center; background: #fff; }
.radio.on { border-color: #19b5cb; }
.radio.on::after { content: ""; width: 8px; height: 8px; border-radius: 50%; background: #19b5cb; }
.swatch { width: 22px; height: 22px; border: 2px solid #a9a7dc; border-radius: 3px; background: #333; margin-right: 4px; flex: none; }
.chev { margin-left: auto; }

.dash-row { margin-top: 16px; height: 32px; display: flex; align-items: center; justify-content: flex-end; }
.dash-l { margin-right: 8px; color: #5d5d86; font-size: 14px; }
.dash-sel { width: 199px; border-radius: 4px; }
.dash-btn { width: 100px; height: 32px; margin-left: 9px; border-radius: 3px; background: linear-gradient(90deg, #b7d8ff, #aef2ec); color: #fff; text-align: center; line-height: 32px; font-size: 14px; }
.rule { margin-top: 16px; height: 1px; background: #b0aedd; }
.pager { margin-top: 11px; height: 32px; display: flex; align-items: center; justify-content: flex-end; gap: 8px; color: #555; font-size: 14px; }
.pager span { margin-right: 3px; }
.pg { width: 32px; height: 32px; border: 1px solid #c6c4e8; border-radius: 3px; background: #fff; text-align: center; line-height: 30px; color: #999; }
.pg.cur { border-color: #19b5cb; color: #19b5cb; }
.pg.size { width: 83px; margin-left: 8px; }

.status { height: 26px; flex: none; background: #2a2a2a; display: flex; align-items: center; justify-content: space-between; padding-right: 28px; font-size: 15.200px; color: #e6e6e6; border-bottom: 1px solid #5a5a5a; }
.status span { padding-bottom: 2px; }
.bottom { height: 9px; flex: none; background: #232323; padding-left: 425px; display: flex; align-items: flex-end; }
.bottom i { width: 50px; height: 3px; background: #4a2020; border-radius: 3px 3px 0 0; }
```
